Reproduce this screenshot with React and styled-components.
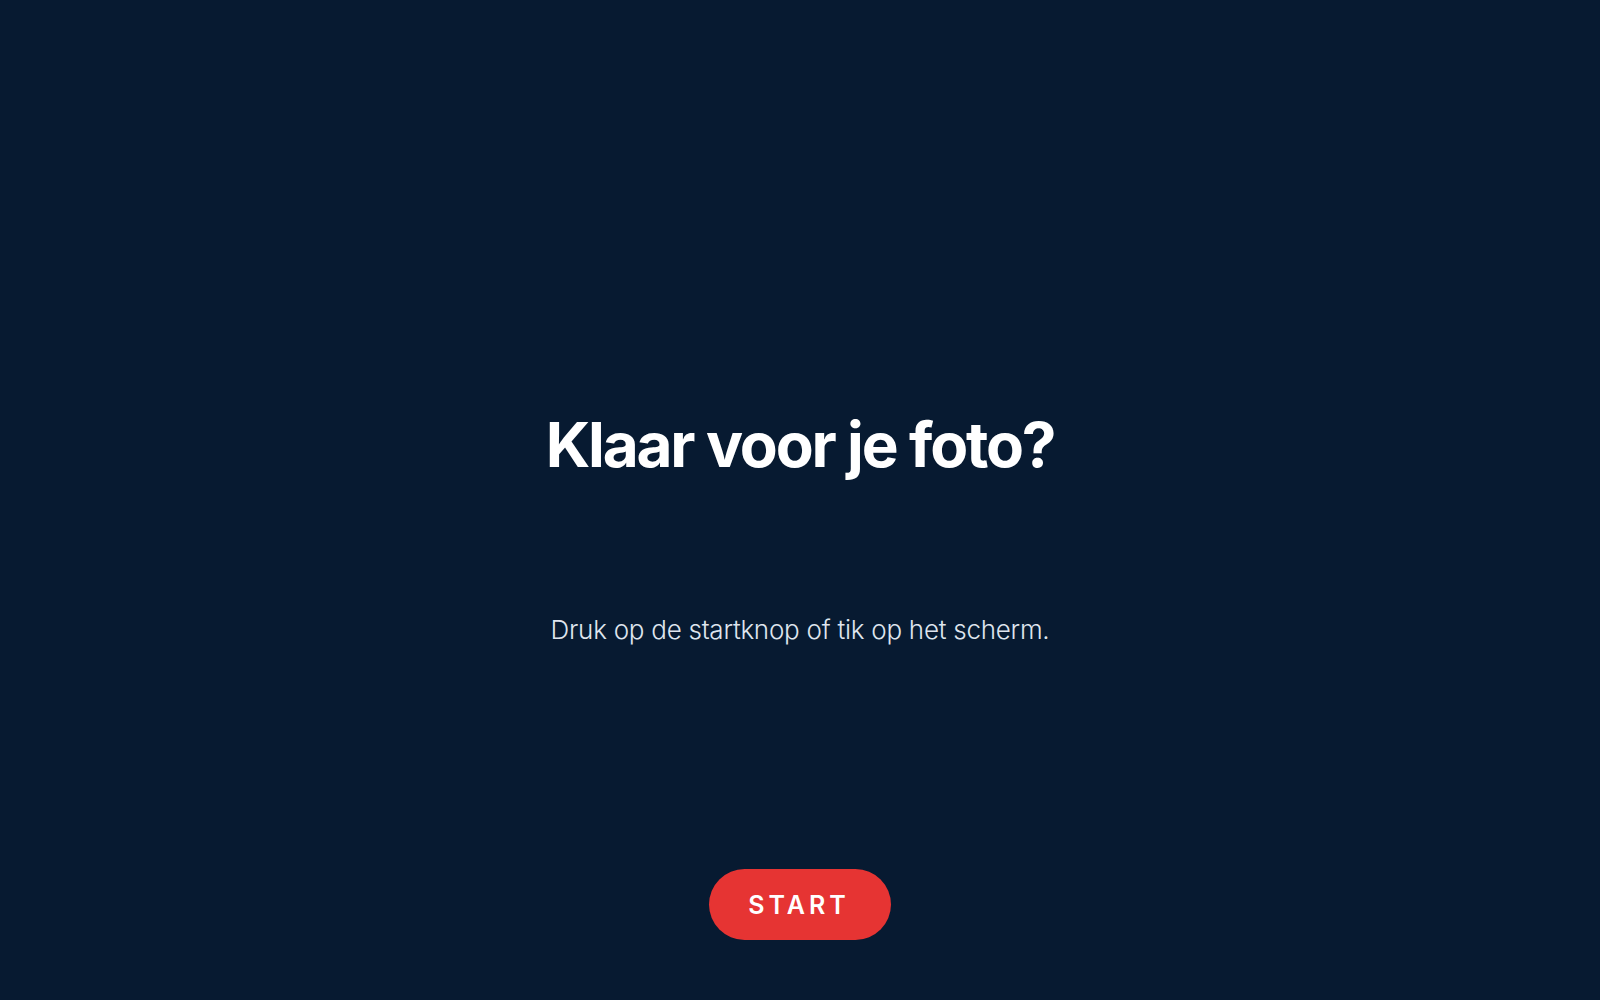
import React from 'react'
import styled, { createGlobalStyle } from 'styled-components'

const GlobalStyle = createGlobalStyle`
  html, body {
    margin: 0;
    padding: 0;
    background: #071a31;
  }
  * { box-sizing: border-box; }
`

const Screen = styled.div`
  min-height: 100vh;
  background: #071a31;
  display: flex;
  flex-direction: column;
  align-items: center;
  font-family: Inter, "Noto Sans", sans-serif;
  padding-top: 404px;
`

const Title = styled.h1`
  margin: 0;
  color: #ffffff;
  font-size: 62px;
  font-weight: 700;
  letter-spacing: -0.035em;
  line-height: 82px;
`

const Subtitle = styled.p`
  margin: 126px 0 0;
  color: #dfe5ee;
  font-size: 26px;
  font-weight: 300;
  line-height: 36px;
  letter-spacing: -0.01em;
`

const StartButton = styled.button`
  margin-top: 221px;
  width: 182px;
  height: 71px;
  border: none;
  border-radius: 36px;
  background: #e63433;
  color: #ffffff;
  font-family: Inter, "Noto Sans", sans-serif;
  font-size: 25px;
  font-weight: 600;
  letter-spacing: 0.16em;
  padding-left: 0.16em;
  cursor: pointer;
`

const App = () => {
  return (
    <>
      <GlobalStyle />
      <Screen>
        <Title>Klaar voor je foto?</Title>
        <Subtitle>Druk op de startknop of tik op het scherm.</Subtitle>
        <StartButton>START</StartButton>
      </Screen>
    </>
  )
}

export default App
